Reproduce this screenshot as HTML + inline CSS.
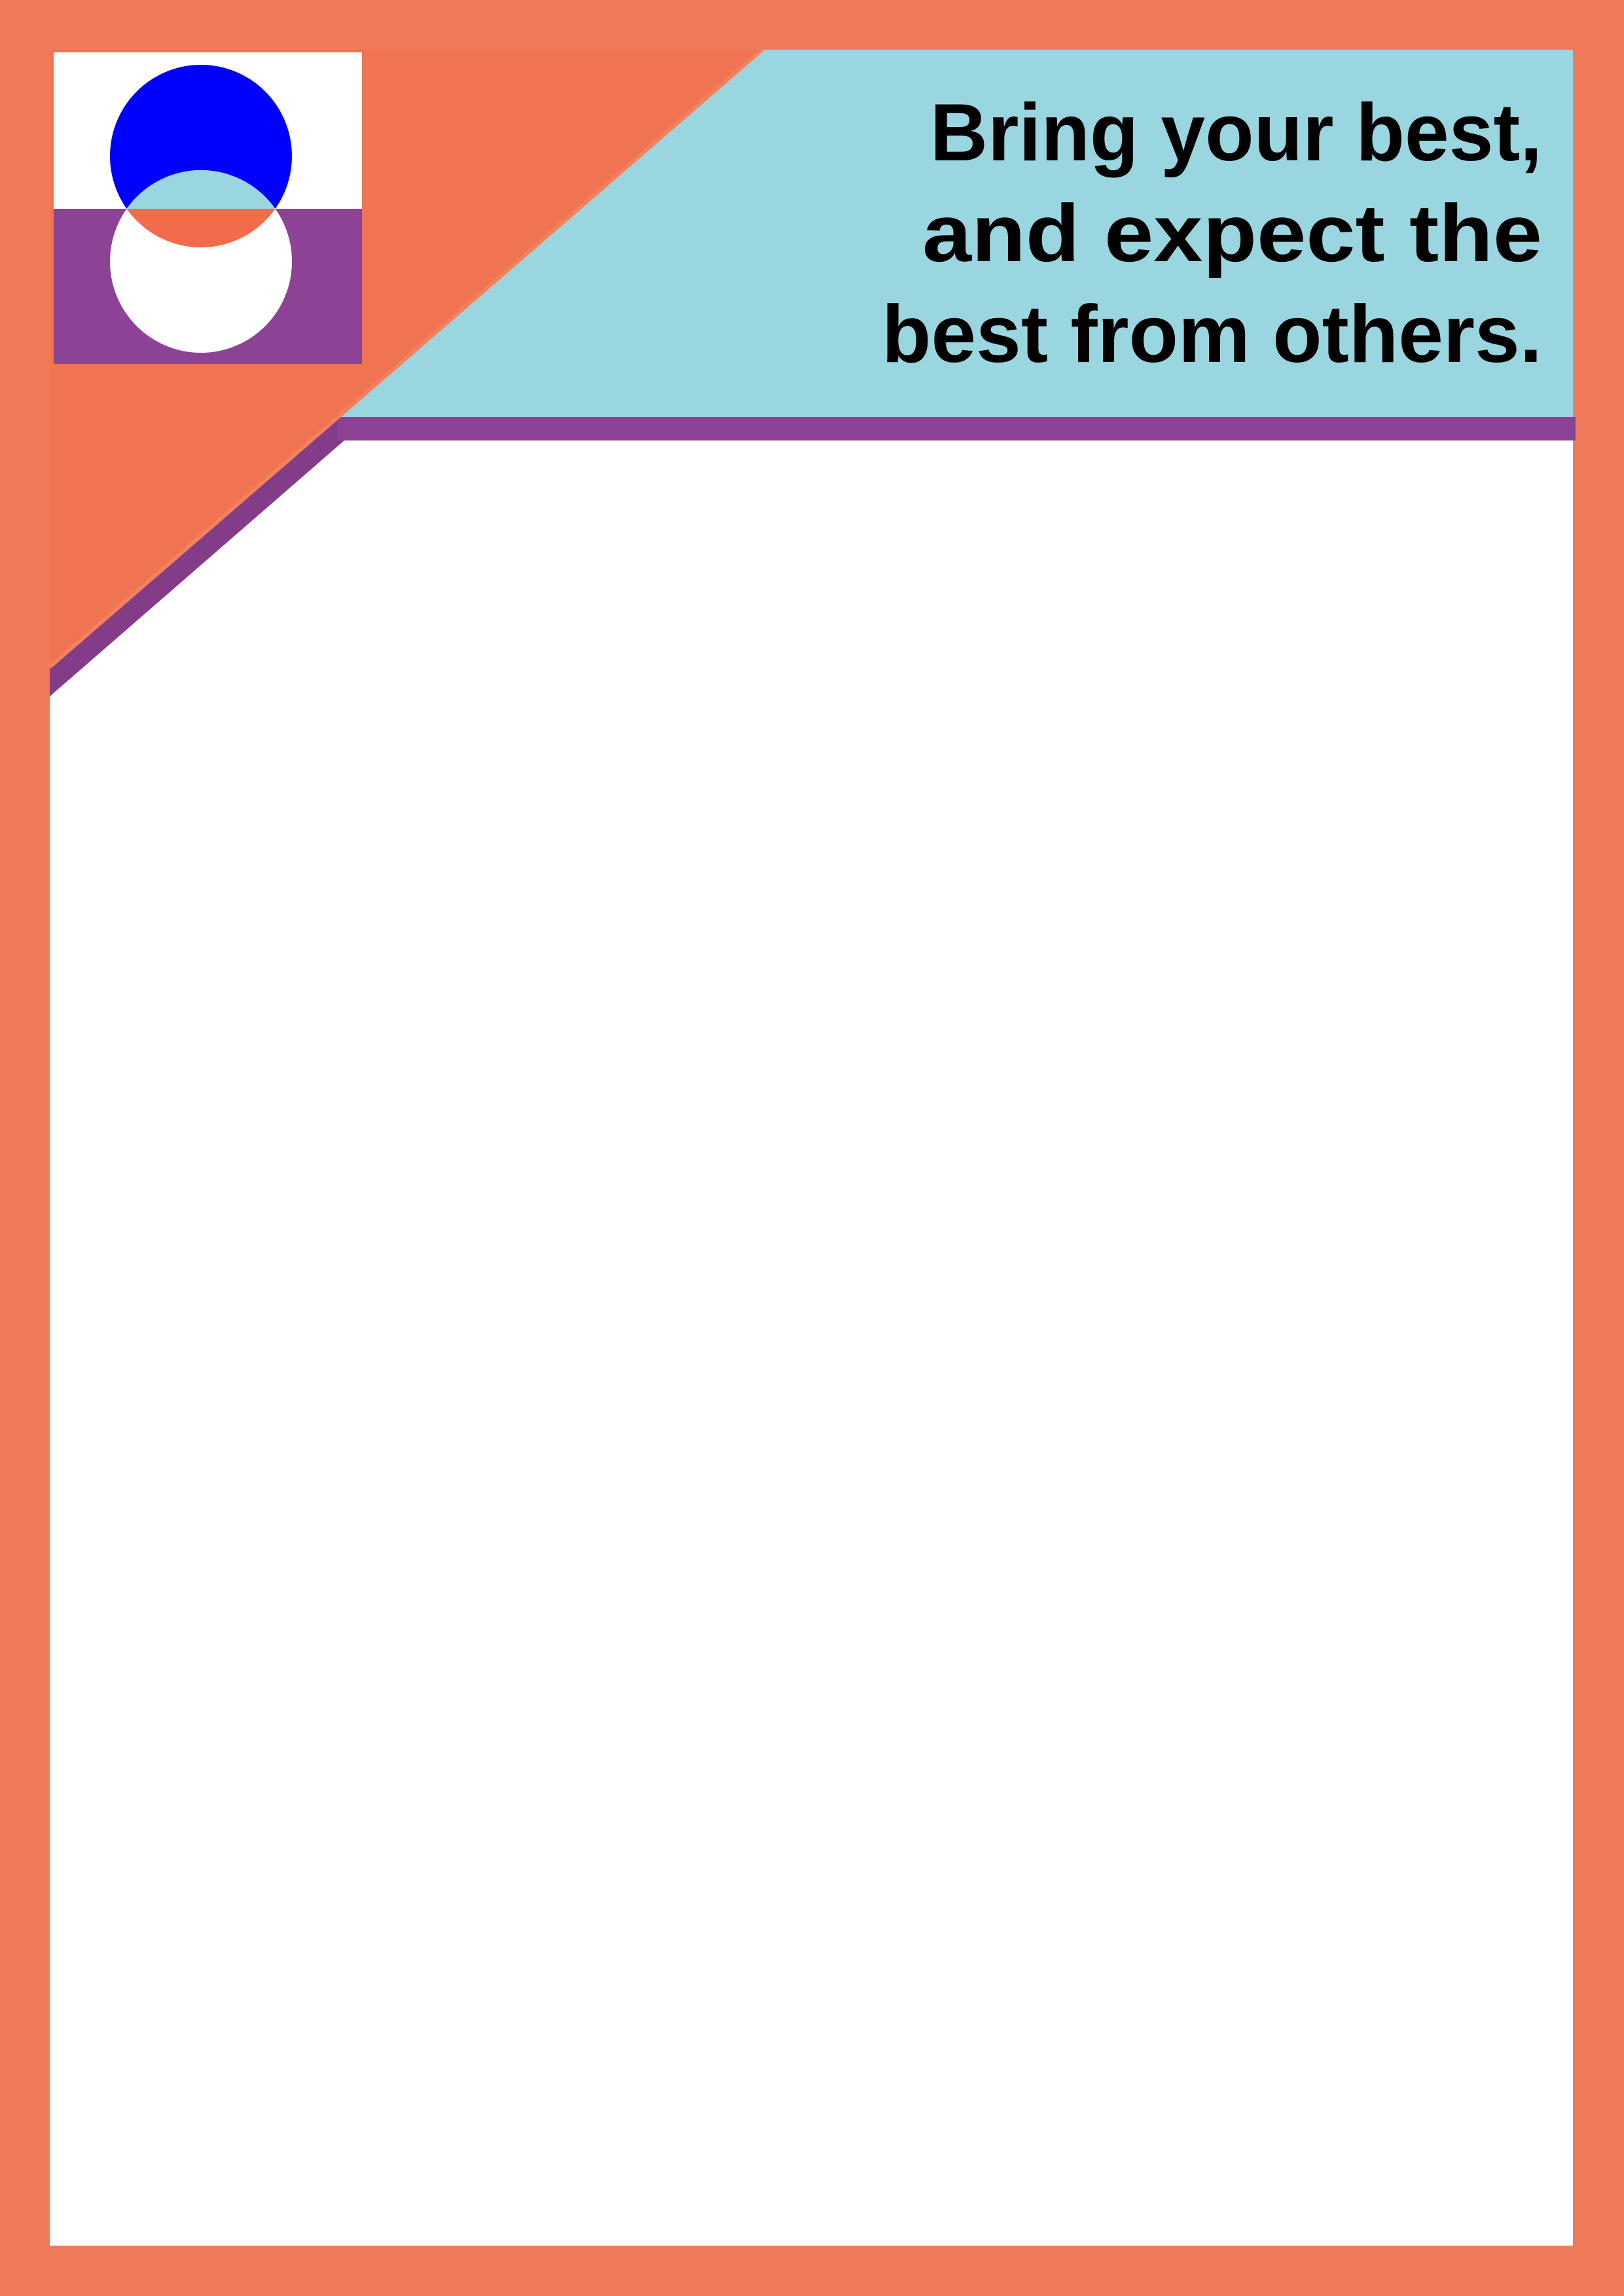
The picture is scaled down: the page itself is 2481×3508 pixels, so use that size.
<!DOCTYPE html>
<html><head><meta charset="utf-8"><style>
html,body{margin:0;padding:0;width:2481px;height:3508px;overflow:hidden;background:#ef7a59}
svg{display:block}
</style></head><body>
<svg width="2481" height="3508" viewBox="0 0 2481 3508" xmlns="http://www.w3.org/2000/svg">
<rect x="0" y="0" width="2481" height="3508" fill="#ef7a59"/>
<rect x="76" y="76" width="2327" height="3355" fill="#ffffff"/>
<!-- orange triangle -->
<polygon points="76,76 1164,76 76,1019" fill="#f07352"/>
<!-- purple diagonal band -->
<polygon points="76,1019 516,637 2407,637 2407,673 526,673 76,1064" fill="#843c88"/>
<rect x="516" y="637" width="1891" height="36" fill="#8c4395"/>
<!-- light blue -->
<polygon points="1164,76 2403,76 2403,637 516,637" fill="#9ad6e0"/>
<!-- thin lighter edge line along diagonal -->
<line x1="1164" y1="76" x2="76" y2="1019" stroke="#f0825f" stroke-width="6"/>
<!-- logo -->
<defs>
<clipPath id="topc"><ellipse cx="307" cy="238.5" rx="139" ry="139.5"/></clipPath>
<clipPath id="botc"><ellipse cx="307" cy="399.5" rx="139" ry="139.5"/></clipPath>
</defs>
<rect x="82" y="80" width="471" height="239" fill="#ffffff"/>
<rect x="82" y="319" width="471" height="237" fill="#8c4395"/>
<ellipse cx="307" cy="238.5" rx="139" ry="139.5" fill="#0000ff"/>
<ellipse cx="307" cy="399.5" rx="139" ry="139.5" fill="#ffffff"/>
<g clip-path="url(#topc)">
<g clip-path="url(#botc)">
<rect x="150" y="240" width="320" height="79" fill="#9ad6e0"/>
<rect x="150" y="319" width="320" height="100" fill="#f26b4a"/>
</g></g>
<!-- text -->
<g font-family="Liberation Sans, Arial, sans-serif" font-weight="bold" font-size="124" fill="#000" text-anchor="end">
<text x="2356" y="245" textLength="935" lengthAdjust="spacingAndGlyphs">Bring your best,</text>
<text x="2356" y="399" textLength="947" lengthAdjust="spacingAndGlyphs">and expect the</text>
<text x="2356" y="553" textLength="1009" lengthAdjust="spacingAndGlyphs">best from others.</text>
</g>
</svg>
</body></html>
